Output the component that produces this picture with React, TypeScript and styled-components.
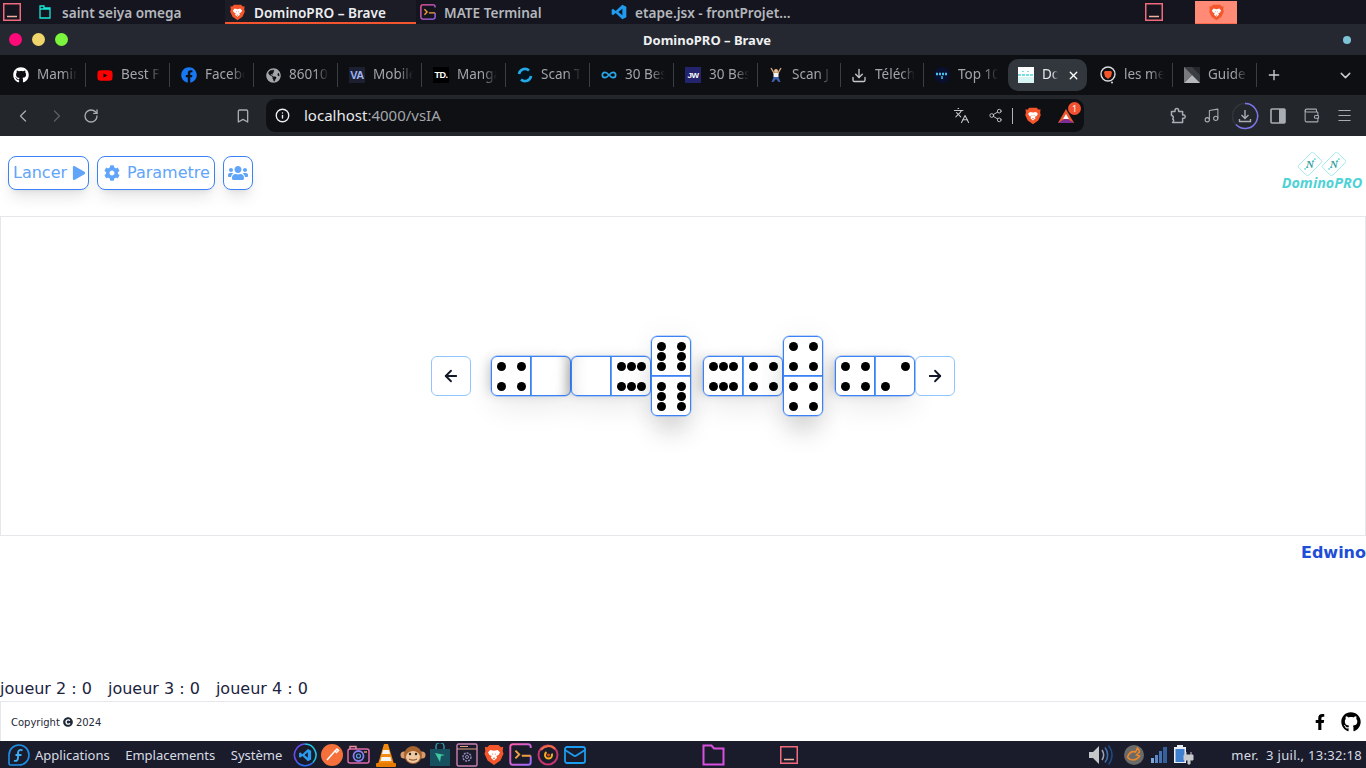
import React from "react";
import styled, { createGlobalStyle } from "styled-components";
import { ArrowLeft, ArrowRight, ChevronDown, ChevronLeft, ChevronRight, RotateCw, Bookmark, Info, Plus, X, Languages, Share2, Music, Download, Wallet, Menu, Infinity as InfinityIcon, Mail } from "lucide-react";
import { FaGithub, FaYoutube, FaFacebook, FaFacebookF, FaPlay, FaCog, FaUsers, FaCopyright, FaGlobeAmericas } from "react-icons/fa";

const Global = createGlobalStyle`
  html, body { margin: 0; padding: 0; background: #fff; }
  * { box-sizing: border-box; }
  #root { width: 1366px; height: 768px; overflow: hidden; }
`;

const Screen = styled.div`
  width: 1366px; height: 768px; display: flex; flex-direction: column; overflow: hidden;
  font-family: "DejaVu Sans", sans-serif;
`;

/* ---------- top desktop panel ---------- */
const TopPanel = styled.div`
  height: 24px; background: #14151e; display: flex; align-items: stretch; padding-left: 3px;
  font-family: "Noto Sans", sans-serif; font-size: 13.6px; font-weight: 600; color: #b4b7bd;
`;
const PanelSlot = styled.div<{ $w: number; $ml?: number }>`
  width: ${p => p.$w}px; margin-left: ${p => p.$ml ?? 0}px; display: flex; align-items: center; justify-content: center; flex: none;
`;
const Task = styled.div<{ $active?: boolean; $pad?: number; $gap?: number }>`
  width: 191px; flex: none; display: flex; align-items: center; gap: ${p => p.$gap ?? 8}px; padding-left: ${p => p.$pad ?? 4}px;
  box-shadow: ${p => (p.$active ? "inset 0 -2px 0 #f4552f" : "none")};
  background: ${p => (p.$active ? "#1b1c26" : "transparent")};
  color: ${p => (p.$active ? "#eceef0" : "#b4b7bd")};
  white-space: nowrap;
`;
const OrangeTask = styled.div`
  width: 42px; margin-left: 32px; margin-top: 1px; height: 23px; background: #ff8a75; border-bottom: 1px solid #ff6a50;
  display: flex; align-items: center; justify-content: center; flex: none;
`;

/* ---------- title bar ---------- */
const TitleBar = styled.div`
  height: 31px; background: #252830; display: flex; align-items: center; padding-left: 9px;
`;
const Light = styled.span<{ $c: string }>`
  width: 13px; height: 13px; border-radius: 50%; background: ${p => p.$c}; margin-right: 10px; flex: none;
`;
const Title = styled.div`
  margin-left: 565px; width: 660px; font-family: "Noto Sans", sans-serif; font-weight: 700; font-size: 13px; color: #eef0f2;
`;
const StatusDot = styled.span`
  width: 8px; height: 8px; border-radius: 50%; background: #7cc3d6; margin-left: 40px;
`;

/* ---------- tab strip ---------- */
const TabStrip = styled.div`
  height: 40px; background: #0e0f13; display: flex; align-items: center; padding-left: 1px;
  font-family: "Noto Sans", sans-serif; font-size: 13.5px; color: #a2a5ab;
`;
const TabBox = styled.div<{ $active?: boolean; $w?: number }>`
  width: ${p => p.$w ?? (p.$active ? 79 : 84)}px; height: ${p => (p.$active ? 32 : 24)}px; flex: none; display: flex; align-items: center; gap: 8px;
  padding-left: ${p => (p.$active ? 10 : 12)}px;
  background: ${p => (p.$active ? "#31373d" : "transparent")};
  border-radius: ${p => (p.$active ? 10 : 0)}px;
  color: ${p => (p.$active ? "#e6e8ea" : "#a2a5ab")};
  margin-right: ${p => (p.$active ? 1 : 0)}px;
`;
const TabIcon = styled.span`
  width: 16px; height: 16px; flex: none; display: flex; align-items: center; justify-content: center;
`;
const TabLabel = styled.span<{ $w?: number }>`
  width: ${p => p.$w ?? 40}px; flex: none; white-space: nowrap; overflow: hidden; margin-bottom: 2px;
  mask-image: linear-gradient(to right, #000 65%, transparent 100%);
`;
const TabSep = styled.span<{ $hide?: boolean }>`
  width: 1px; height: 24px; margin-left: auto; background: ${p => (p.$hide ? "transparent" : "#3a3d43")}; flex: none;
`;
const TabClose = styled.span`
  margin-left: 1px; display: flex; color: #fff;
`;
const StripButton = styled.span<{ $ml: number }>`
  margin-left: ${p => p.$ml}px; display: flex; color: #c9ccd0;
`;
const SquareIcon = styled.span<{ $bg: string; $fg: string; $fs?: number }>`
  width: 16px; height: 16px; background: ${p => p.$bg}; color: ${p => p.$fg}; font: 700 ${p => p.$fs ?? 8}px "Liberation Sans", sans-serif;
  display: flex; align-items: center; justify-content: center; letter-spacing: -0.5px;
`;

/* ---------- url toolbar ---------- */
const Toolbar = styled.div`
  height: 41px; background: #23272c; display: flex; align-items: center; padding-left: 6px; color: #a8adb3;
`;
const ToolSlot = styled.span<{ $w?: number; $ml?: number; $dim?: boolean }>`
  width: ${p => p.$w ?? 34}px; margin-left: ${p => p.$ml ?? 0}px; flex: none; display: flex; align-items: center; justify-content: center;
  color: ${p => (p.$dim ? "#5b6066" : "inherit")};
`;
const UrlBar = styled.div`
  margin-left: 6px; width: 818px; height: 33px; background: #0f1014; border-radius: 9px; display: flex; align-items: center;
  padding-left: 8px; padding-right: 1px; font-family: "Noto Sans", sans-serif; font-size: 15px; color: #e8eaec;
`;
const UrlIcon = styled.span`
  width: 16px; display: flex; justify-content: center; color: #eceef0; flex: none;
`;
const UrlText = styled.span`
  margin-left: 14px; margin-bottom: 1px;
  em { font-style: normal; color: #a2a6ac; }
`;
const UrlRight = styled.div`
  margin-left: auto; display: flex; align-items: center; color: #c2c5c9;
`;
const UrlSep = styled.span`
  width: 1px; height: 16px; background: #b0b3b8; margin: 0 3px 0 0;
`;
const Badged = styled.span`
  position: relative; display: flex; width: 34px; justify-content: center;
`;
const Badge = styled.span`
  position: absolute; top: -6px; right: 2px; width: 13px; height: 13px; border-radius: 50%; background: #f4502f; color: #fff;
  font: 400 9px "Noto Sans", sans-serif; display: flex; align-items: center; justify-content: center;
`;

/* ---------- page ---------- */
const Page = styled.main`
  flex: 1; min-height: 0; background: #fff; display: flex; flex-direction: column;
`;
const Header = styled.header`
  height: 81px; flex: none; display: flex; align-items: flex-start; padding: 20px 4px 0 8px; gap: 8px; border-bottom: 1px solid #e5e7eb;
`;
const ActionButton = styled.button<{ $w: number; $pad: number; $gap?: number }>`
  width: ${p => p.$w}px; height: 34px; padding: 0 0 0 ${p => p.$pad}px; background: #fff; border: 1px solid #3b82f6; border-radius: 8px; color: #60a5fa;
  font: 400 16px "DejaVu Sans", sans-serif; display: flex; align-items: center; gap: ${p => p.$gap ?? 5}px; white-space: nowrap;
  box-shadow: 0 10px 15px -3px rgba(0,0,0,.1), 0 4px 6px -4px rgba(0,0,0,.1);
`;
const ButtonText = styled.span`
  margin-bottom: 2px;
`;
const Logo = styled.div`
  margin-left: auto; margin-top: -4px; width: 80px; display: flex; flex-direction: column; align-items: center;
  color: #4fd2d6; font: italic 700 14.4px "Open Sans", sans-serif; line-height: 14px; white-space: nowrap;
`;
const Board = styled.section`
  height: 319px; flex: none; border: 1px solid #e5e7eb; border-top: 0; display: flex; align-items: center; justify-content: center; padding-left: 20px;
`;
const NavButton = styled.button<{ $mr?: number }>`
  width: 40px; height: 40px; padding: 0; margin-right: ${p => p.$mr ?? 0}px; flex: none; background: #fff; border: 1px solid #93c5fd; border-radius: 6px;
  display: flex; align-items: center; justify-content: center; color: #111827;
`;
const DominoBox = styled.div<{ $v?: boolean; $mr?: number }>`
  display: flex; flex-direction: ${p => (p.$v ? "column" : "row")}; flex: none; margin-right: ${p => p.$mr ?? 0}px;
  border-radius: 6px; outline: 1px solid #3b82f6; outline-offset: -1px;
  box-shadow: 0 0 0 .4px rgba(59,130,246,.6),
    ${p => (p.$v ? "0 18px 26px -4px rgba(0,0,0,.18), 0 0 30px rgba(0,0,0,.05)" : "0 12px 30px -2px rgba(0,0,0,.09), -5px 0 12px -3px rgba(0,0,0,.2)")};
`;
const Half = styled.div<{ $first: boolean; $v?: boolean; $blank: boolean; $shadeRight?: boolean }>`
  width: 40px; height: 40px; padding: 5px; display: grid; grid-template-columns: repeat(3, 10px); grid-template-rows: repeat(3, 10px);
  border-radius: ${p => (p.$first ? (p.$v ? "6px 6px 0 0" : "6px 0 0 6px") : p.$v ? "0 0 6px 6px" : "0 6px 6px 0")};
  background: #fff;
  ${p => (p.$first ? (p.$v ? "border-bottom: 1px solid #3b82f6;" : "border-right: 1px solid #3b82f6;") : "")}
  ${p => (!p.$first ? (p.$v ? "box-shadow: inset 0 1px 0 rgba(59,130,246,.8);" : "box-shadow: inset 1px 0 0 rgba(59,130,246,.8);") : "")}
  ${p => (p.$blank && p.$shadeRight ? "box-shadow: inset -12px 0 12px -8px rgba(0,0,0,.2), inset 1px 0 0 rgba(59,130,246,.8);" : "")}
  ${p => (p.$blank && !p.$shadeRight ? "box-shadow: inset 14px 0 14px -10px rgba(0,0,0,.1);" : "")}
`;
const Pip = styled.span<{ $c: number; $r: number }>`
  width: 9px; height: 9px; border-radius: 50%; background: #000; grid-column: ${p => p.$c}; grid-row: ${p => p.$r}; place-self: center;
`;
const NameRow = styled.div`
  flex: none; text-align: right; font-weight: 700; font-size: 16px; line-height: 19px; padding-top: 7px; color: #1d4ed8; white-space: nowrap;
`;
const Scores = styled.div`
  margin-top: auto; flex: none; display: flex; gap: 16px; font-size: 16px; line-height: 19px; color: #1c2340; padding-bottom: 3px;
`;
const Footer = styled.footer`
  height: 40px; flex: none; border: 1px solid #e5e7eb; border-right: 0; border-bottom: 0; display: flex; align-items: center; padding: 1px 5px 0 10px;
  font-size: 10px; color: #1f2937; gap: 3px;
`;
const FooterLinks = styled.div`
  margin-left: auto; display: flex; align-items: center; gap: 13px; color: #000;
`;

/* ---------- bottom panel ---------- */
const BottomPanel = styled.div`
  height: 27px; flex: none; background: #1a1c2c; display: flex; align-items: center; padding-left: 8px;
  font-family: "Noto Sans", sans-serif; font-size: 13px; color: #d8dbe2;
`;
const Menus = styled.div`
  display: flex; align-items: center; gap: 15.5px; margin-left: 5px; white-space: nowrap;
`;
const Launchers = styled.div`
  display: flex; align-items: center; margin-left: 9px;
`;
const Launcher = styled.span`
  width: 27px; display: flex; align-items: center; justify-content: center; flex: none;
`;
const TraySlot = styled.span<{ $ml: number }>`
  margin-left: ${p => p.$ml}px; display: flex; align-items: center; flex: none;
`;
const Clock = styled.span`
  margin-left: 36px; white-space: pre; letter-spacing: 0.3px;
`;
const RingWrap = styled.span`
  display: flex;
`;

/* ---------- drawn icons ---------- */
const Brave = ({ s = 16 }: { s?: number }) => (
  <svg width={s} height={s} viewBox="0 0 24 24">
    <path d="M7 1h10l2.500 2.500L22 3l-.5 5 .9 2.500L19 18l-7 5-7-5-3.400-7.500L2.500 8 2 3l2.500.5z" fill="#f4552b" />
    <path d="M8 6.500l4 .8 4-.8 2.500 2.500-1.500 3-2.500 1 1 2-3.500 3-3.500-3 1-2-2.500-1-1.500-3z" fill="#fff" />
    <path d="M9.500 10.500h1.500v1.500zM13 10.500h1.500L13 12zM10.500 15h3L12 16.500z" fill="#f4552b" />
  </svg>
);
const WindowIcon = ({ s = 18 }: { s?: number }) => (
  <svg width={s} height={s} viewBox="0 0 18 18" fill="none">
    <rect x=".75" y=".75" width="16.500" height="16.500" stroke="#f06a7c" strokeWidth="1.500" />
    <path d="M4 13.500h10" stroke="#f2b0a0" strokeWidth="1.500" />
  </svg>
);
const FilesIcon = () => (
  <svg width="12" height="14" viewBox="0 0 12 14" fill="none">
    <path d="M1 1h4v2h6v10H1zM1 4h10" stroke="#19e6d6" strokeWidth="1.300" />
  </svg>
);
const TerminalIcon = ({ s = 16 }: { s?: number }) => (
  <svg width={s} height={s} viewBox="0 0 18 18" fill="none">
    <defs>
      <linearGradient id="tg" x1="0" y1="0" x2="1" y2="1">
        <stop offset="0" stopColor="#ff5aa8" />
        <stop offset="1" stopColor="#9a6bff" />
      </linearGradient>
    </defs>
    <path d="M17 4V3a2 2 0 0 0-2-2H3a2 2 0 0 0-2 2v12a2 2 0 0 0 2 2h12a2 2 0 0 0 2-2v-5" stroke="url(#tg)" strokeWidth="1.500" />
    <path d="M5 6l3 3-3 3M10 10h7" stroke="#f0a040" strokeWidth="1.500" />
  </svg>
);
const VsCode = ({ s = 16 }: { s?: number }) => (
  <svg width={s} height={s} viewBox="0 0 24 24">
    <path d="M17 1l6 3v16l-6 3-10-9.500L3 17l-2-1.500V8.500L3 7l4 3.500zM17 7l-6 5 6 5z" fill="#1f9cf0" fillRule="evenodd" />
  </svg>
);
const TrebIcon = () => (
  <svg width="16" height="16" viewBox="0 0 16 16" fill="none">
    <circle cx="8" cy="8" r="8" fill="#06121c" />
    <path d="M2 7a6 6 0 0 1 10-3.500M14 9a6 6 0 0 1-10 3.500" stroke="#24a9e6" strokeWidth="2.600" />
  </svg>
);
const RunnerIcon = () => (
  <svg width="16" height="16" viewBox="0 0 16 16" fill="none">
    <circle cx="8" cy="4" r="2" fill="#e5c3a0" />
    <path d="M3 1l3 5h4l3-5" stroke="#d9a37c" strokeWidth="1.400" />
    <rect x="5.500" y="6" width="5" height="4" fill="#f3f3f3" />
    <path d="M5.500 10h5l2 5h-2L8 12l-2.500 3h-2z" fill="#3d5fa8" />
  </svg>
);
const MojoIcon = () => (
  <svg width="16" height="16" viewBox="0 0 16 16">
    <circle cx="8" cy="8" r="8" fill="#0a1030" />
    <path d="M2 7h12" stroke="#43c3e8" strokeWidth="2.400" strokeDasharray="2 1" />
    <path d="M8 9v3" stroke="#43c3e8" strokeWidth="1.500" />
  </svg>
);
const DominoFavicon = () => (
  <svg width="16" height="16" viewBox="0 0 16 16">
    <rect width="16" height="16" fill="#fff" />
    <path d="M0 8h16" stroke="#4fd2d6" strokeWidth="1.600" strokeDasharray="3 1" />
    <path d="M5 4v1M10 4v1" stroke="#4fd2d6" strokeWidth="1.500" />
    <rect y="10" width="16" height="6" fill="#d8f4f4" />
  </svg>
);
const LionRing = () => (
  <svg width="16" height="18" viewBox="0 0 16 18" fill="none">
    <circle cx="8" cy="8" r="7" stroke="#d9dbdd" strokeWidth="1.400" />
    <path d="M5 5h6l1 1.500-1 4L8 13l-3-2.500-1-4z" fill="#f4552b" />
    <circle cx="12" cy="16.500" r="1" fill="#d9dbdd" />
  </svg>
);
const GuideIcon = () => (
  <svg width="16" height="16" viewBox="0 0 16 16">
    <rect width="16" height="16" fill="#3a3d42" />
    <path d="M0 16L8 8l8 8z" fill="#b6b8bb" />
    <path d="M0 0h8l8 8V0z" fill="#24262a" />
    <path d="M0 0l8 8-8 8z" fill="#77797d" />
  </svg>
);
const BatTriangle = () => (
  <svg width="18" height="16" viewBox="0 0 18 16">
    <path d="M9 1l8 14H1z" fill="#f0562e" />
    <path d="M1 15l8-5 8 5z" fill="#7b2d91" />
    <path d="M9 6l3 5H6z" fill="#fff" />
  </svg>
);
const PuzzleIcon = () => (
  <svg width="18" height="18" viewBox="0 0 18 18" fill="none">
    <path d="M2.500 4.500H6V3.200a1.800 1.800 0 0 1 3.600 0v1.300h4v3.600h1a1.600 1.600 0 0 1 0 3.200h-1v4.200H3.500a2 2 0 0 0 .2-3.500 2 2 0 0 0-1.200-3.500z" stroke="currentColor" strokeWidth="1.500" strokeLinejoin="round" />
  </svg>
);
const SidePanelIcon = () => (
  <svg width="16" height="16" viewBox="0 0 16 16" fill="none">
    <rect x="1" y="1" width="14" height="14" rx="1" stroke="currentColor" strokeWidth="1.600" />
    <rect x="9" y="1" width="6" height="14" fill="currentColor" />
  </svg>
);
const DownloadRing = () => (
  <RingWrap>
    <svg width="28" height="28" viewBox="0 0 28 28" fill="none">
      <circle cx="14" cy="14" r="12.500" stroke="#32363c" strokeWidth="1.500" />
      <path d="M14 1.500A12.500 12.500 0 1 1 5 22.500" stroke="#7b74ea" strokeWidth="1.500" />
      <path d="M14 8v8M10.500 13l3.500 3.500 3.500-3.500M8.500 17v2.500h11V17" stroke="#a8adb3" strokeWidth="1.400" />
    </svg>
  </RingWrap>
);
const LogoMark = () => {
  const tile = (cx: number) => (
    <g key={cx} transform={`rotate(-45 ${cx} 12)`}>
      <rect x={cx - 10.500} y="5" width="21" height="14" rx="1.500" fill="#fff" stroke="#9be6e9" strokeWidth=".9" />
      <circle cx={cx - 7} cy="12" r=".9" fill="#5fd8dc" />
      <circle cx={cx - 4.500} cy="12" r=".9" fill="#5fd8dc" />
      <circle cx={cx + 4.500} cy="12" r=".9" fill="#5fd8dc" />
      <circle cx={cx + 7} cy="12" r=".9" fill="#5fd8dc" />
    </g>
  );
  return (
    <svg width="48" height="24" viewBox="0 0 48 24">
      {tile(12)}
      {tile(36)}
      <text x="12" y="16" textAnchor="middle" fontFamily="Liberation Serif, serif" fontSize="11" fill="#3a9fa2">N</text>
      <text x="36" y="16" textAnchor="middle" fontFamily="Liberation Serif, serif" fontSize="11" fill="#3a9fa2">N</text>
    </svg>
  );
};

/* taskbar launchers */
const Fedora = () => (
  <svg width="22" height="22" viewBox="0 0 22 22" fill="none">
    <path d="M11 1a10 10 0 0 1 0 20H2.500A1.500 1.500 0 0 1 1 19.500V11A10 10 0 0 1 11 1z" stroke="#1c8fe6" strokeWidth="1.600" />
    <path d="M14.500 6.500c-2.500-1.500-4.500 0-4.500 2.500v5c0 2.500-2 3.500-4 2.500M7.500 11h6" stroke="#3ab0f5" strokeWidth="1.900" />
  </svg>
);
const Launch = {
  Code: () => (
    <svg width="24" height="24" viewBox="0 0 24 24" fill="none">
      <path d="M12 1a11 11 0 0 1 8 18.500" stroke="#1cc6e0" strokeWidth="1.600" />
      <path d="M20 19.500A11 11 0 0 1 4 19" stroke="#2d6cf0" strokeWidth="1.600" />
      <path d="M4 19A11 11 0 0 1 12 1" stroke="#6a4df0" strokeWidth="1.600" />
      <g transform="translate(5.500 5.500) scale(.55)"><path d="M17 1l6 3v16l-6 3-10-9.500L3 17l-2-1.500V8.500L3 7l4 3.500zM17 7l-6 5 6 5z" fill="#2a9cf0" fillRule="evenodd" /></g>
    </svg>
  ),
  Postman: () => (
    <svg width="22" height="22" viewBox="0 0 22 22" fill="none">
      <circle cx="11" cy="11" r="11" fill="#f5703a" />
      <path d="M6 16l8-9M14 7l2-2 1.500 1.500-2 2z" stroke="#fff" strokeWidth="1.500" />
    </svg>
  ),
  Camera: () => (
    <svg width="23" height="20" viewBox="0 0 23 20" fill="none">
      <rect x="1" y="4" width="21" height="14" rx="2" stroke="#e06aa8" strokeWidth="1.500" />
      <path d="M3 4V1.500h6V4" stroke="#f08aa0" strokeWidth="1.400" />
      <circle cx="11.500" cy="11" r="5" stroke="#8a7cf0" strokeWidth="1.800" />
      <circle cx="11.500" cy="11" r="2" stroke="#5fa0f0" strokeWidth="1.200" />
      <path d="M17 7h3" stroke="#f0a060" strokeWidth="1.400" />
    </svg>
  ),
  Vlc: () => (
    <svg width="20" height="24" viewBox="0 0 20 24">
      <path d="M8 1h4l6 20H2z" fill="#f28a10" />
      <path d="M7 7h6l1 4H6zM5.500 14h9l1 4h-11z" fill="#f4f4f4" />
      <rect x="0" y="20" width="20" height="4" rx="1" fill="#e77a00" />
    </svg>
  ),
  Monkey: () => (
    <svg width="26" height="20" viewBox="0 0 26 20">
      <circle cx="4" cy="10" r="3.500" fill="#d79a6c" />
      <circle cx="22" cy="10" r="3.500" fill="#d79a6c" />
      <ellipse cx="13" cy="10" rx="9" ry="9" fill="#a8642f" />
      <ellipse cx="13" cy="12" rx="7" ry="6" fill="#f0c9a0" />
      <circle cx="10" cy="9" r="1.200" fill="#222" />
      <circle cx="16" cy="9" r="1.200" fill="#222" />
      <path d="M9 14c2 1.500 6 1.500 8 0" stroke="#7a4220" fill="none" />
    </svg>
  ),
  Bag: () => (
    <svg width="22" height="24" viewBox="0 0 22 24" fill="none">
      <rect x="1" y="6" width="20" height="17" fill="#17505f" />
      <path d="M7 6V3.500a4 4 0 0 1 8 0V6" stroke="#2f9db0" strokeWidth="1.400" />
      <path d="M6 10l10 2-4 1-1 6z" fill="#3ec9a0" />
    </svg>
  ),
  Settings: () => (
    <svg width="22" height="24" viewBox="0 0 22 24" fill="none">
      <rect x="1" y="1" width="20" height="22" rx="1.500" stroke="#c980b0" strokeWidth="1.400" />
      <path d="M1 6h20M4 3.500h8" stroke="#e0a080" strokeWidth="1.200" />
      <circle cx="11" cy="14" r="4" stroke="#9a8cc0" strokeWidth="1.400" strokeDasharray="2 1" />
      <circle cx="11" cy="14" r="1.500" stroke="#9a8cc0" />
    </svg>
  ),
  Firefox: () => (
    <svg width="22" height="22" viewBox="0 0 22 22" fill="none">
      <circle cx="11" cy="11" r="9.500" stroke="#c8356e" strokeWidth="2" />
      <path d="M4 6a9 9 0 0 1 14-1" stroke="#f06a40" strokeWidth="2" />
      <circle cx="11.500" cy="11" r="3.500" stroke="#f5b020" strokeWidth="2" strokeDasharray="14 6" />
      <circle cx="11.500" cy="11" r="1.500" fill="#e0441f" />
    </svg>
  ),
};
const FolderIcon = () => (
  <svg width="23" height="22" viewBox="0 0 23 22" fill="none">
    <path d="M1.500 1.500h8l2.500 3h9.500v16h-20z" stroke="#d94fe0" strokeWidth="2" />
  </svg>
);
const Speaker = () => (
  <svg width="26" height="22" viewBox="0 0 26 22" fill="none">
    <path d="M1 8h4l6-6v18l-6-6H1z" fill="#c4c6c9" />
    <path d="M14 6c2 3 2 7 0 10" stroke="#9aa6b5" strokeWidth="1.500" />
    <path d="M17 3.500c3.500 4.500 3.500 10.500 0 15" stroke="#3f6fa8" strokeWidth="1.600" />
    <path d="M20.500 1.500c4.500 6 4.500 13 0 19" stroke="#1d4a80" strokeWidth="1.600" />
  </svg>
);
const Update = () => (
  <svg width="20" height="20" viewBox="0 0 20 20" fill="none">
    <circle cx="10" cy="10" r="10" fill="#6a6a68" />
    <path d="M3.500 12c2 4 9 4 12-1l-3-1 3-3c0-2-1-3-2-4l-2 4c-3-1-6 0-8 5z" stroke="#f0882a" strokeWidth="1.500" />
  </svg>
);
const Signal = () => (
  <svg width="18" height="18" viewBox="0 0 18 18">
    <rect x="1" y="12" width="3" height="5" fill="#7fa6d8" />
    <rect x="5" y="9" width="3" height="8" fill="#5d88c4" />
    <rect x="9" y="5" width="3" height="12" fill="#4471b0" />
    <rect x="13" y="1" width="4" height="16" fill="#35609c" />
  </svg>
);
const Battery = () => (
  <svg width="22" height="21" viewBox="0 0 22 21">
    <path d="M1 3h3V1h6v2h3v16H1z" fill="#e8ecf2" />
    <rect x="2.500" y="5" width="9" height="13" fill="#3f7fd0" />
    <path d="M11 11h9v5H11zM13 8v3M18 8v3M15 16h2v4h-2z" fill="#c8cacc" stroke="#c8cacc" />
  </svg>
);

/* ---------- data ---------- */
const tabs: [React.ReactNode, string, number][] = [
  [<FaGithub size={16} color="#fff" />, "Mamin", 84],
  [<FaYoutube size={17} color="#f00" />, "Best F", 84],
  [<FaFacebook size={16} color="#1877f2" />, "Facebook", 84],
  [<FaGlobeAmericas size={15} color="#a2a5ab" />, "86010", 84],
  [<SquareIcon $bg="#1d2030" $fg="#9fb4f0" $fs={11}>VA</SquareIcon>, "Mobile", 84],
  [<SquareIcon $bg="#000" $fg="#fff" $fs={9}>TD.</SquareIcon>, "Manga", 84],
  [<TrebIcon />, "Scan T", 84],
  [<InfinityIcon size={16} color="#2aa7e8" strokeWidth={2.500} />, "30 Best", 84],
  [<SquareIcon $bg="#23236e" $fg="#fff">JW</SquareIcon>, "30 Best", 83],
  [<RunnerIcon />, "Scan J", 83],
  [<Download size={17} color="#c4c6ca" />, "Téléch", 83],
  [<MojoIcon />, "Top 10", 86],
];

const layouts: Record<number, [number, number][]> = {
  0: [],
  2: [[3, 1], [1, 3]],
  4: [[1, 1], [3, 1], [1, 3], [3, 3]],
};
const pipsOf = (n: number, v?: boolean): [number, number][] => {
  if (n === 6) {
    const a = [1, 2, 3];
    return v
      ? a.flatMap(r => [[1, r], [3, r]] as [number, number][])
      : a.flatMap(c => [[c, 1], [c, 3]] as [number, number][]);
  }
  return layouts[n];
};

const Domino = ({ a, b, v, mr, shade }: { a: number; b: number; v?: boolean; mr?: number; shade?: boolean }) => (
  <DominoBox $v={v} $mr={mr}>
    {[a, b].map((n, i) => (
      <Half key={i} $first={i === 0} $v={v} $blank={n === 0} $shadeRight={shade}>
        {pipsOf(n, v).map(([c, r]) => <Pip key={`${c}-${r}`} $c={c} $r={r} />)}
      </Half>
    ))}
  </DominoBox>
);

export default function App() {
  return (
    <Screen>
      <Global />
      <TopPanel>
        <PanelSlot $w={18}><WindowIcon /></PanelSlot>
        <PanelSlot $w={13} />
        <Task $pad={5} $gap={11}><FilesIcon /> saint seiya omega</Task>
        <Task $active $pad={4}><Brave s={17} /> DominoPRO – Brave</Task>
        <Task><TerminalIcon /> MATE Terminal</Task>
        <Task><VsCode /> etape.jsx - frontProjet...</Task>
        <PanelSlot $w={18} $ml={347}><WindowIcon /></PanelSlot>
        <OrangeTask><Brave s={17} /></OrangeTask>
      </TopPanel>

      <TitleBar>
        <Light $c="#ff0a78" />
        <Light $c="#f0d46c" />
        <Light $c="#7cf53e" />
        <Title>DominoPRO – Brave</Title>
        <StatusDot />
      </TitleBar>

      <TabStrip>
        {tabs.map(([icon, label, w], i) => (
          <TabBox key={i} $w={w}>
            <TabIcon>{icon}</TabIcon>
            <TabLabel>{label}</TabLabel>
            <TabSep $hide={i === 11} />
          </TabBox>
        ))}
        <TabBox $active>
          <TabIcon><DominoFavicon /></TabIcon>
          <TabLabel $w={16}>Do</TabLabel>
          <TabClose><X size={13} strokeWidth={2.500} /></TabClose>
        </TabBox>
        <TabBox>
          <TabIcon><LionRing /></TabIcon>
          <TabLabel>les meilleurs</TabLabel>
          <TabSep />
        </TabBox>
        <TabBox>
          <TabIcon><GuideIcon /></TabIcon>
          <TabLabel>Guide</TabLabel>
          <TabSep />
        </TabBox>
        <StripButton $ml={10}><Plus size={16} /></StripButton>
        <StripButton $ml={55}><ChevronDown size={17} /></StripButton>
      </TabStrip>

      <Toolbar>
        <ToolSlot><ChevronLeft size={20} strokeWidth={1.500} /></ToolSlot>
        <ToolSlot $dim><ChevronRight size={20} strokeWidth={1.500} /></ToolSlot>
        <ToolSlot><RotateCw size={16} /></ToolSlot>
        <ToolSlot $ml={118}><Bookmark size={16} /></ToolSlot>
        <UrlBar>
          <UrlIcon><Info size={15} strokeWidth={2.200} /></UrlIcon>
          <UrlText>localhost<em>:4000/vsIA</em></UrlText>
          <UrlRight>
            <ToolSlot><Languages size={17} strokeWidth={1.500} /></ToolSlot>
            <ToolSlot><Share2 size={15} strokeWidth={1.500} /></ToolSlot>
            <UrlSep />
            <ToolSlot $w={33}><Brave s={18} /></ToolSlot>
            <Badged>
              <BatTriangle />
              <Badge>1</Badge>
            </Badged>
          </UrlRight>
        </UrlBar>
        <ToolSlot $ml={77}><PuzzleIcon /></ToolSlot>
        <ToolSlot $w={33}><Music size={17} strokeWidth={1.500} /></ToolSlot>
        <ToolSlot $w={33}><DownloadRing /></ToolSlot>
        <ToolSlot $w={33}><SidePanelIcon /></ToolSlot>
        <ToolSlot $w={34}><Wallet size={17} strokeWidth={1.500} /></ToolSlot>
        <ToolSlot $w={33}><Menu size={17} strokeWidth={1.500} /></ToolSlot>
      </Toolbar>

      <Page>
        <Header>
          <ActionButton $w={81} $pad={4}><ButtonText>Lancer</ButtonText> <FaPlay size={14} /></ActionButton>
          <ActionButton $w={118} $pad={6} $gap={7}><FaCog size={16} /> <ButtonText>Parametre</ButtonText></ActionButton>
          <ActionButton $w={30} $pad={4}><FaUsers size={20} /></ActionButton>
          <Logo>
            <LogoMark />
            DominoPRO
          </Logo>
        </Header>

        <Board>
          <NavButton $mr={20}><ArrowLeft size={18} strokeWidth={2.400} /></NavButton>
          <Domino a={4} b={0} shade />
          <Domino a={0} b={6} />
          <Domino a={6} b={6} v mr={12} />
          <Domino a={6} b={4} />
          <Domino a={4} b={4} v mr={12} />
          <Domino a={4} b={2} />
          <NavButton><ArrowRight size={18} strokeWidth={2.400} /></NavButton>
        </Board>

        <NameRow>Edwino</NameRow>

        <Scores>
          <span>joueur 2 : 0</span>
          <span>joueur 3 : 0</span>
          <span>joueur 4 : 0</span>
        </Scores>

        <Footer>
          Copyright <FaCopyright size={10} /> 2024
          <FooterLinks>
            <FaFacebookF size={16} />
            <FaGithub size={20} />
          </FooterLinks>
        </Footer>
      </Page>

      <BottomPanel>
        <Fedora />
        <Menus>
          <span>Applications</span>
          <span>Emplacements</span>
          <span>Système</span>
        </Menus>
        <Launchers>
          <Launcher><Launch.Code /></Launcher>
          <Launcher><Launch.Postman /></Launcher>
          <Launcher><Launch.Camera /></Launcher>
          <Launcher><Launch.Vlc /></Launcher>
          <Launcher><Launch.Monkey /></Launcher>
          <Launcher><Launch.Bag /></Launcher>
          <Launcher><Launch.Settings /></Launcher>
          <Launcher><Brave s={22} /></Launcher>
          <Launcher><TerminalIcon s={23} /></Launcher>
          <Launcher><Launch.Firefox /></Launcher>
          <Launcher><Mail size={24} color="#1c9cf0" strokeWidth={1.800} /></Launcher>
        </Launchers>
        <TraySlot $ml={114}><FolderIcon /></TraySlot>
        <TraySlot $ml={55}><WindowIcon s={18} /></TraySlot>
        <TraySlot $ml={290}><Speaker /></TraySlot>
        <TraySlot $ml={10}><Update /></TraySlot>
        <TraySlot $ml={6}><Signal /></TraySlot>
        <TraySlot $ml={5}><Battery /></TraySlot>
        <Clock>mer.  3 juil., 13:32:18</Clock>
      </BottomPanel>
    </Screen>
  );
}
